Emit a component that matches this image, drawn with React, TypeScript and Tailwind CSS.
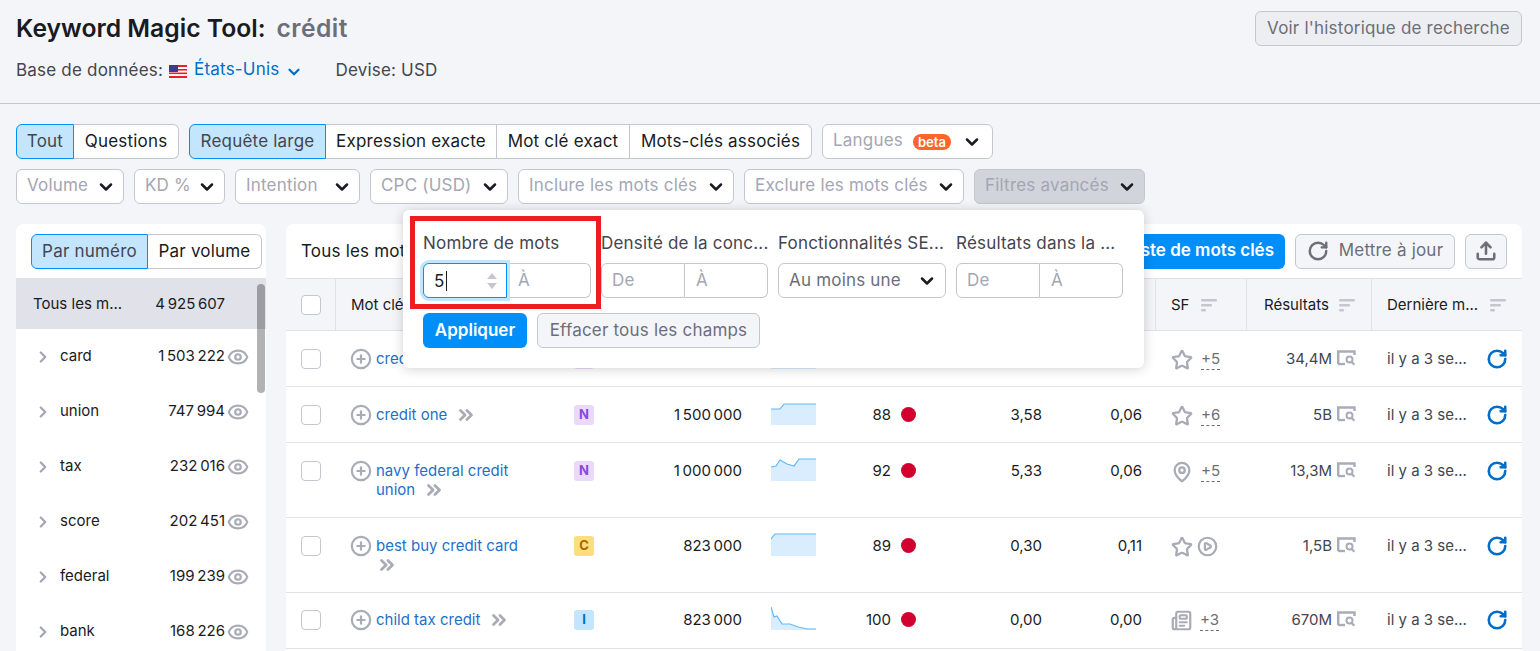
import * as React from "react";
import { ChevronDown, ChevronRight, ChevronsRight, CirclePlus, Eye, RotateCw, Star, MapPin, CirclePlay, Newspaper, Upload } from "lucide-react";

const rowsSide = [
  { nom: "card", total: "1\u2009503\u2009222" },
  { nom: "union", total: "747\u2009994" },
  { nom: "tax", total: "232\u2009016" },
  { nom: "score", total: "202\u2009451" },
  { nom: "federal", total: "199\u2009239" },
  { nom: "bank", total: "168\u2009226" },
];

const intentColors: Record<string, string> = {
  N: "bg-[#ead9fc] text-[#8649e1]",
  C: "bg-[#fcdf7d] text-[#b36200]",
  I: "bg-[#c4e5fe] text-[#006dca]",
};

const keywords = [
  { mot: ["credit karma"], intent: "N", vol: "1\u2009500\u2009000", kd: "85", cpc: "0,00", dens: "0,00", sf: "star", plus: "+5", res: "34,4M", h: "h-[56px] pt-[18px]", line: "M0,21 L14,21 L18,3 L45,3" },
  { mot: ["credit one"], intent: "N", vol: "1\u2009500\u2009000", kd: "88", cpc: "3,58", dens: "0,06", sf: "star", plus: "+6", res: "5B", h: "h-[56px] pt-[18px]", line: "M0,7 L9,7 L13,2 L45,2" },
  { mot: ["navy federal credit", "union"], intent: "N", vol: "1\u2009000\u2009000", kd: "92", cpc: "5,33", dens: "0,06", sf: "pin", plus: "+5", res: "13,3M", h: "h-[75px] pt-[18px]", line: "M0,9 L5,8 L9,2 L16,6 L23,8 L28,1 L45,1" },
  { mot: ["best buy credit card", ""], intent: "C", vol: "823\u2009000", kd: "89", cpc: "0,30", dens: "0,11", sf: "play", plus: "", res: "1,5B", h: "h-[75px] pt-[18px]", line: "M0,6 L4,1 L45,1" },
  { mot: ["child tax credit"], intent: "I", vol: "823\u2009000", kd: "100", cpc: "0,00", dens: "0,00", sf: "news", plus: "+3", res: "670M", h: "h-[56px] pt-[17px]", line: "M0,0 L3,10 L6,9 L11,17 L19,17 L27,20 L36,22 L45,22" },
];

const grid = "grid grid-cols-[50px_224px_60px_136px_76px_100px_124px_100px_91px_125px_150px]";

function Sort() {
  return (
    <svg width="16" height="14" viewBox="0 0 16 14" className="shrink-0 text-[#c4c7cf]" fill="currentColor">
      <rect x="0" y="1" width="16" height="2.5" rx="1" />
      <rect x="0" y="6" width="11" height="2.5" rx="1" />
      <rect x="0" y="11" width="5" height="2.5" rx="1" />
    </svg>
  );
}

function Chevron() {
  return <ChevronDown size={20} strokeWidth={3} className="text-[#191b23] shrink-0" />;
}

function Filtre({ label, w, grey }: { label: string; w: string; grey?: boolean }) {
  return (
    <div className={`${w} h-[35px] flex items-center justify-between pl-[10px] pr-[7px] rounded-md border border-[#c4c7cf] text-[#a4a6b3] ${grey ? "bg-[#d1d4db]" : "bg-white"}`}>
      <span className="mb-[1px]">{label}</span>
      <Chevron />
    </div>
  );
}

function Seg({ label, active, cls }: { label: string; active?: boolean; cls: string }) {
  return (
    <div className={`${cls} h-[35px] flex items-center justify-center border ${active ? "bg-[#c4e5fe] border-[#008ff8] text-[#43454f]" : "bg-white border-[#c4c7cf] text-[#191b23]"}`}>
      {label}
    </div>
  );
}

function ResultIcon() {
  return (
    <svg width="19" height="17" viewBox="0 0 19 17" fill="none" className="shrink-0 text-[#a9abb6]">
      <path d="M1.2 15V2.5H17.5V6" stroke="currentColor" strokeWidth="2.4" />
      <path d="M1 15h7" stroke="currentColor" strokeWidth="2.4" />
      <circle cx="12.5" cy="10.5" r="3" stroke="currentColor" strokeWidth="2" />
      <path d="M14.6 13l2.8 2.8" stroke="currentColor" strokeWidth="2.2" />
    </svg>
  );
}

function SfIcon({ type }: { type: string }) {
  const cls = "text-[#a9abb6] shrink-0";
  if (type === "pin") return <MapPin size={22} strokeWidth={2.5} className={cls} />;
  if (type === "news") return <Newspaper size={21} strokeWidth={2.5} className={cls} />;
  return <Star size={22} strokeWidth={2.5} className={cls} />;
}

function Spark({ line }: { line: string }) {
  return (
    <svg width="45" height="23" viewBox="0 0 45 23">
      <path d={`${line} L45,23 L0,23 Z`} fill="#d9edfe" />
      <path d={line} fill="none" stroke="#61b8f7" strokeWidth="1.2" />
    </svg>
  );
}

export default function App() {
  return (
    <div className="w-[1540px] h-[651px] overflow-hidden bg-[#f4f5f9] text-[17px] tracking-[0.2px] text-[#191b23] relative" style={{ fontFamily: "Inter, 'Noto Sans', sans-serif" }}>
      {/* entete */}
      <div className="h-[104px] border-b border-[#c4c7cf] px-4 pr-[18px] pt-[11px] flex justify-between items-start">
        <div>
          <div className="flex items-center gap-[11px] h-[35px] text-[24.7px] tracking-normal font-semibold leading-[35px]">
            <span>Keyword Magic Tool:</span>
            <span className="text-[#6c6e79] tracking-[0.4px]">crédit</span>
          </div>
          <div className="flex items-center mt-[6px] h-[35px] pt-[2px] text-[#43454f]">
            <span>Base de données:</span>
            <svg width="18" height="13" viewBox="0 0 18 13" className="ml-[6px] mt-[2px]">
              <rect width="18" height="13" fill="#fff" />
              <rect y="0" width="18" height="2" fill="#e8202a" />
              <rect y="4" width="18" height="1.6" fill="#e8202a" />
              <rect y="7.5" width="18" height="1.6" fill="#e8202a" />
              <rect y="11" width="18" height="2" fill="#e8202a" />
              <rect width="9" height="7" fill="#3c3b8e" />
            </svg>
            <span className="ml-[7px] text-[#006dca] -mt-[2px]">États-Unis</span>
            <ChevronDown size={18} strokeWidth={3} className="text-[#006dca] ml-[6px] mt-[3px]" />
            <span className="ml-[32px]">Devise: USD</span>
          </div>
        </div>
        <div className="h-[35px] w-[267px] flex items-center justify-center rounded-md border border-[#c4c7cf] bg-[#eceef2] text-[#6c6e79]">
          Voir l'historique de recherche
        </div>
      </div>

      {/* filtres */}
      <div className="px-4 pt-5">
        <div className="flex">
          <Seg label="Tout" active cls="w-[58px] rounded-l-md" />
          <Seg label="Questions" cls="w-[105px] rounded-r-md border-l-0" />
          <Seg label="Requête large" active cls="w-[137px] ml-[10px] rounded-l-md" />
          <Seg label="Expression exacte" cls="w-[171px] border-l-0" />
          <Seg label="Mot clé exact" cls="w-[133px] border-l-0" />
          <Seg label="Mots-clés associés" cls="w-[182px] rounded-r-md border-l-0" />
          <div className="w-[171px] ml-[10px] h-[35px] flex items-center pl-[10px] rounded-md border border-[#c4c7cf] bg-white text-[#a4a6b3]">
            <span className="mb-[1px]">Langues</span>
            <span className="ml-[10px] h-[16px] px-[5px] rounded-full bg-[#ff642d] text-white text-[13px] tracking-normal font-semibold leading-[16px]">beta</span>
            <ChevronDown size={20} strokeWidth={3} className="text-[#191b23] ml-[11px]" />
          </div>
        </div>
        <div className="flex gap-[10px] mt-[10px]">
          <Filtre label="Volume" w="w-[108px]" />
          <Filtre label="KD %" w="w-[91px]" />
          <Filtre label="Intention" w="w-[125px]" />
          <Filtre label="CPC (USD)" w="w-[138px]" />
          <Filtre label="Inclure les mots clés" w="w-[216px]" />
          <Filtre label="Exclure les mots clés" w="w-[220px]" />
          <Filtre label="Filtres avancés" w="w-[171px]" grey />
        </div>
      </div>

      {/* panneaux */}
      <div className="flex gap-5 px-4 pr-[18px] mt-5">
        <div className="w-[250px] h-[500px] shrink-0 bg-white rounded-t-lg relative overflow-hidden">
          <div className="flex pl-[15px] pt-[10px] h-[54px]">
            <Seg label="Par numéro" active cls="w-[117px] rounded-l-md" />
            <Seg label="Par volume" cls="w-[114px] rounded-r-md border-l-0" />
          </div>
          <div className="h-[51px] bg-[#e0e1e9] flex items-center justify-between pl-[17px] pr-[41px] pt-[1px] text-[15px] tracking-normal text-[#191b23]">
            <span>Tous les m...</span>
            <span>4{"\u2009"}925{"\u2009"}607</span>
          </div>
          {rowsSide.map((r) => (
            <div key={r.nom} className="h-[55px] flex items-center pl-[18px] pr-[17px] text-[15px] tracking-normal text-[#191b23]">
              <ChevronRight size={18} strokeWidth={3} className="text-[#a4a6b3]" />
              <span className="ml-[8px] flex-1">{r.nom}</span>
              <span>{r.total}</span>
              <Eye size={22} strokeWidth={2.4} className="text-[#a9abb6] ml-[2px]" />
            </div>
          ))}
          <div className="absolute left-[241px] top-[60px] w-2 h-[109px] rounded bg-black/30" />
        </div>

        <div className="flex-1 h-[500px] bg-white rounded-t-lg">
          <div className="h-[54px] flex items-center justify-between pl-[15px] pr-[15px]">
            <span className="pt-[1px]">Tous les mots</span>
            <div className="flex">
              <div className="h-[35px] w-[260px] flex items-center justify-end pr-[11px] rounded-md bg-[#008ff8] text-white font-semibold tracking-normal">Liste de mots clés</div>
              <div className="h-[35px] w-[160px] ml-[10px] flex items-center justify-center rounded-md border border-[#c4c7cf] bg-[#f4f5f9] text-[#6c6e79]">
                <RotateCw size={22} strokeWidth={2.6} className="mr-[10px]" />
                <span>Mettre à jour</span>
              </div>
              <div className="h-[35px] w-[42px] ml-[10px] flex items-center justify-center rounded-md border border-[#c4c7cf] bg-[#f4f5f9] text-[#6c6e79]">
                <Upload size={22} strokeWidth={2.8} />
              </div>
            </div>
          </div>

          <div className={`${grid} h-[53px] bg-[#f4f5f9] border-y border-[#e0e1e9] text-[15px] tracking-normal`}>
            <div className="flex items-center justify-center border-r border-[#e0e1e9]">
              <div className="w-5 h-5 rounded border border-[#c4c7cf] bg-white" />
            </div>
            <div className="flex items-center pl-[15px] pt-[1px] col-span-7 border-r border-[#e0e1e9]">Mot clé</div>
            <div className="flex items-center pl-[15px] pt-[1px] gap-[12px] border-r border-[#e0e1e9]">SF <Sort /></div>
            <div className="flex items-center pl-[17px] pt-[1px] gap-[10px] border-r border-[#e0e1e9]">Résultats <Sort /></div>
            <div className="flex items-center pl-[15px] pt-[1px] gap-[12px]">Dernière m... <Sort /></div>
          </div>

          {keywords.map((k) => (
            <div key={k.mot[0]} className={`${grid} ${k.h} border-b border-[#e0e1e9] text-[15px] tracking-normal text-[#43454f]`}>
              <div className="flex justify-center">
                <div className="w-5 h-5 rounded border border-[#c4c7cf] bg-white" />
              </div>
              <div className="flex pl-[14px] gap-[4px]">
                <CirclePlus size={22} strokeWidth={2.4} className="text-[#a9abb6] shrink-0 -mt-[1px]" />
                <div className="text-[#1f6fca] leading-[19px]">
                  {k.mot.map((m, i) => (
                    <div key={i} className="flex items-center gap-[8px] h-[19px] whitespace-nowrap">
                      {m}
                      {i === k.mot.length - 1 && <ChevronsRight size={22} strokeWidth={3} className="text-[#a9abb6]" />}
                    </div>
                  ))}
                </div>
              </div>
              <div className="pl-[14px]">
                <div className={`w-5 h-5 rounded-[3px] flex items-center justify-center text-[13px] font-bold ${intentColors[k.intent]}`}>{k.intent}</div>
              </div>
              <div className="pr-[14px] text-right text-[#191b23] leading-5">{k.vol}</div>
              <div className="-mt-[3px] pl-[15px]"><Spark line={k.line} /></div>
              <div className="pr-[16px] flex justify-end items-start gap-[10px] text-[#191b23] leading-5">
                {k.kd}
                <span className="w-[15px] h-[15px] mt-[2px] rounded-full bg-[#d1002f]" />
              </div>
              <div className="pr-[14px] text-right text-[#191b23] leading-5">{k.cpc}</div>
              <div className="pr-[14px] text-right text-[#191b23] leading-5">{k.dens}</div>
              <div className="pl-[15px] flex items-start gap-[8px]">
                <SfIcon type={k.sf} />
                {k.plus ? (
                  <span className="text-[#6c6e79] leading-5 border-b border-dashed border-[#6c6e79]">{k.plus}</span>
                ) : (
                  <CirclePlay size={21} strokeWidth={2.5} className="text-[#a9abb6] -ml-[4px]" />
                )}
              </div>
              <div className="pr-[16px] flex justify-end items-start gap-[5px] leading-5">
                {k.res}
                <ResultIcon />
              </div>
              <div className="pl-[15px] pr-[14px] flex justify-between items-start leading-5">
                il y a 3 se...
                <RotateCw size={22} strokeWidth={2.8} className="text-[#006dca] -mt-[1px]" />
              </div>
            </div>
          ))}
        </div>
      </div>

      {/* filtres avances, ouvert */}
      <div className="absolute left-[403px] top-[210px] w-[741px] h-[158px] bg-white rounded-md shadow-[0_1px_12px_rgba(25,27,35,0.2)] pl-5 pt-[23px]">
        <div className="flex gap-[10px]">
          <div className="w-[168px]">
            <div className="h-5 leading-5 whitespace-nowrap text-[#43454f]">Nombre de mots</div>
            <div className="flex mt-[10px] h-[35px]">
              <div className="w-[84px] rounded-l-md border border-[#008ff8] bg-white shadow-[0_0_0_3px_#c4e5fe] flex items-center justify-between pl-[10px] pr-[8px] relative z-10">
                <span className="border-r border-[#191b23] pr-[1px] leading-5">5</span>
                <svg width="12" height="18" viewBox="0 0 12 18" fill="#c4c7cf"><path d="M6 1l5 6H1z" /><path d="M6 17l5-6H1z" /></svg>
              </div>
              <div className="w-[84px] rounded-r-md border border-l-0 border-[#c4c7cf] flex items-center pl-[11px] text-[#a4a6b3]">À</div>
            </div>
          </div>
          <div className="w-[167px]">
            <div className="h-5 leading-5 whitespace-nowrap text-[#43454f]">Densité de la conc...</div>
            <div className="flex mt-[10px] h-[35px]">
              <div className="w-[84px] rounded-l-md border border-[#c4c7cf] flex items-center pl-[10px] text-[#a4a6b3]">De</div>
              <div className="w-[83px] rounded-r-md border border-l-0 border-[#c4c7cf] flex items-center pl-[11px] text-[#a4a6b3]">À</div>
            </div>
          </div>
          <div className="w-[168px]">
            <div className="h-5 leading-5 whitespace-nowrap text-[#43454f]">Fonctionnalités SE...</div>
            <div className="flex mt-[10px] h-[35px] rounded-md border border-[#c4c7cf] items-center justify-between pl-[10px] pr-[8px] text-[#6c6e79]">
              <span>Au moins une</span>
              <Chevron />
            </div>
          </div>
          <div className="w-[167px]">
            <div className="h-5 leading-5 whitespace-nowrap text-[#43454f]">Résultats dans la ...</div>
            <div className="flex mt-[10px] h-[35px]">
              <div className="w-[84px] rounded-l-md border border-[#c4c7cf] flex items-center pl-[10px] text-[#a4a6b3]">De</div>
              <div className="w-[83px] rounded-r-md border border-l-0 border-[#c4c7cf] flex items-center pl-[11px] text-[#a4a6b3]">À</div>
            </div>
          </div>
        </div>
        <div className="flex gap-[10px] mt-[15px]">
          <div className="w-[104px] h-[35px] rounded-md bg-[#008ff8] text-white font-semibold tracking-normal flex items-center justify-center">Appliquer</div>
          <div className="w-[223px] h-[35px] rounded-md border border-[#c4c7cf] bg-[#f4f5f9] text-[#6c6e79] flex items-center justify-center">Effacer tous les champs</div>
        </div>
        <div className="absolute left-[7px] top-[6px] w-[191px] h-[93px] border-[5px] border-[#ed1c24] pointer-events-none" />
      </div>
    </div>
  );
}
